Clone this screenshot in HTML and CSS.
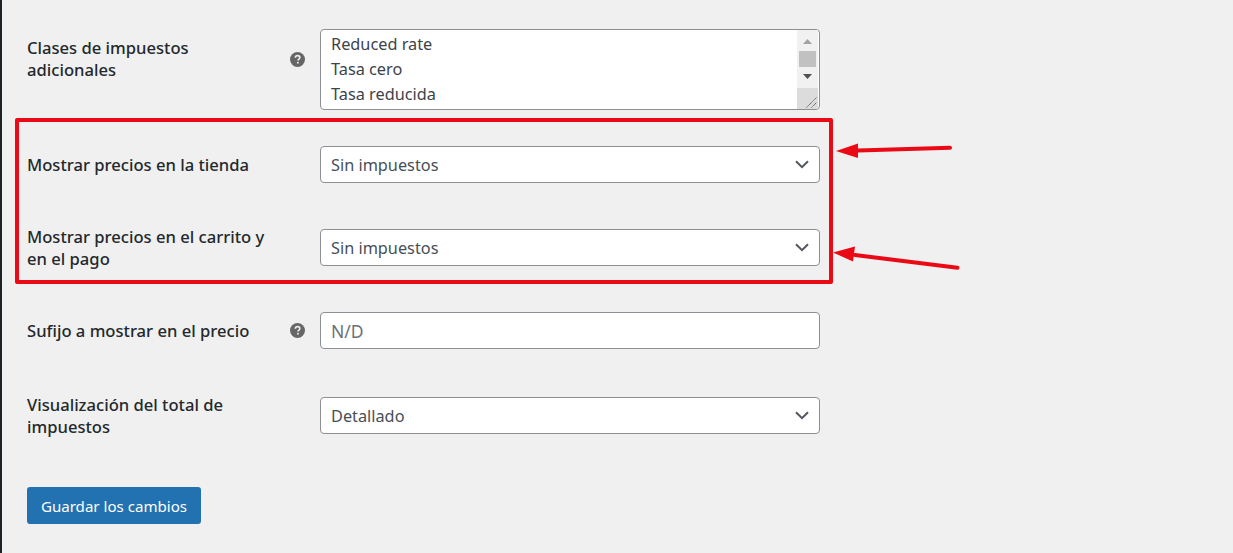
FILE: index.html
```html
<!DOCTYPE html>
<html lang="en">
<head>
    <meta charset="UTF-8">
    <meta name="viewport" content="width=device-width, initial-scale=1.0">
    <title>Opciones de impuestos</title>
    <link rel="stylesheet" href="styles.css">
</head>
<body>
    <form class="settings">
        <!-- Tax classes -->
        <div class="row row-list">
            <label class="row-label">Clases de impuestos adicionales</label>
            <span class="help-cell">
                <svg class="help-icon" viewBox="0 0 16 16"><circle cx="8" cy="8" r="8" fill="#666"/><path d="M5.6 6.200c.1-1.500 1.100-2.300 2.500-2.300s2.400.8 2.400 2c0 1-.6 1.500-1.200 1.900-.6.4-.8.7-.8 1.300" fill="none" stroke="#efefef" stroke-width="1.700"/><rect x="7.500" y="10.500" width="1.800" height="1.800" fill="#efefef"/></svg>
            </span>
            <div class="listbox">
                <ul class="listbox-items">
                    <li>Reduced rate</li>
                    <li>Tasa cero</li>
                    <li>Tasa reducida</li>
                </ul>
                <div class="scrollbar">
                    <svg class="scroll-arrow" viewBox="0 0 9 5"><path d="M4.500 0L9 5H0z" fill="#a3a3a3"/></svg>
                    <div class="scroll-thumb"></div>
                    <svg class="scroll-arrow" viewBox="0 0 9 5"><path d="M0 0h9L4.500 5z" fill="#505050"/></svg>
                    <div class="scroll-corner">
                        <svg viewBox="0 0 11 11"><path d="M0.500 10.500L10.500 0.500M5.500 10.500L10.500 5.500" stroke="#555" stroke-width="1" stroke-dasharray="1.200 .5" fill="none"/></svg>
                    </div>
                </div>
            </div>
        </div>

        <!-- Price display -->
        <div class="row row-shop">
            <label class="row-label">Mostrar precios en la tienda</label>
            <span class="help-cell"></span>
            <div class="field select-field">Sin impuestos
                <svg class="chevron" viewBox="0 0 14 9"><path d="M1 1.200l6 6 6-6" fill="none" stroke="#50575e" stroke-width="2"/></svg>
            </div>
        </div>
        <div class="row row-cart">
            <label class="row-label">Mostrar precios en el carrito y en el pago</label>
            <span class="help-cell"></span>
            <div class="field select-field">Sin impuestos
                <svg class="chevron" viewBox="0 0 14 9"><path d="M1 1.200l6 6 6-6" fill="none" stroke="#50575e" stroke-width="2"/></svg>
            </div>
        </div>

        <div class="row row-suffix">
            <label class="row-label">Sufijo a mostrar en el precio</label>
            <span class="help-cell">
                <svg class="help-icon" viewBox="0 0 16 16"><circle cx="8" cy="8" r="8" fill="#666"/><path d="M5.6 6.200c.1-1.500 1.100-2.300 2.500-2.300s2.400.8 2.400 2c0 1-.6 1.500-1.200 1.900-.6.4-.8.7-.8 1.300" fill="none" stroke="#efefef" stroke-width="1.700"/><rect x="7.500" y="10.500" width="1.800" height="1.800" fill="#efefef"/></svg>
            </span>
            <div class="field text-field">N/D</div>
        </div>
        <div class="row row-total">
            <label class="row-label">Visualización del total de impuestos</label>
            <span class="help-cell"></span>
            <div class="field select-field">Detallado
                <svg class="chevron" viewBox="0 0 14 9"><path d="M1 1.200l6 6 6-6" fill="none" stroke="#50575e" stroke-width="2"/></svg>
            </div>
        </div>

        <button type="button" class="save-btn">Guardar los cambios</button>
    </form>

    <!-- Red annotations on top of the screenshot -->
    <div class="note-box"></div>
    <svg class="note-arrows" viewBox="0 0 1233 553">
        <path d="M950 147.700L858 150.500" stroke="#ea0a16" stroke-width="4" stroke-linecap="round" fill="none"/>
        <path d="M836 151L858 143.500V158z" fill="#ea0a16"/>
        <path d="M957.500 267.800L855 255" stroke="#ea0a16" stroke-width="4" stroke-linecap="round" fill="none"/>
        <path d="M833 252.500L855 246.500L853 261.500z" fill="#ea0a16"/>
    </svg>
</body>
</html>
```

FILE: styles.css
```css
* {
    margin: 0;
    padding: 0;
    box-sizing: border-box;
}

body {
    position: relative;
    height: 553px;
    overflow: hidden;
    background: #f0f0f0;
    border-left: 2px solid #1d2327;
    color: #1d2327;
    font-family: "Noto Sans", "Open Sans", sans-serif;
    font-size: 16px;
}

.settings {
    display: flex;
    flex-direction: column;
    align-items: flex-start;
    padding: 29px 0 0 25px;
}

/* Label, help icon, control */
.row {
    display: grid;
    grid-template-columns: 245px 16px 32px 500px;
    align-items: center;
}

.row-list {
    align-items: start;
    margin-bottom: 37px;
}

.row-shop {
    margin-bottom: 43px;
}

.row-cart {
    margin-bottom: 42px;
}

.row-suffix {
    margin-bottom: 45px;
}

.row-total {
    margin-bottom: 49px;
}

.row-label {
    grid-column: 1 / 3;
    max-width: 245px;
    font-size: 16.600px;
    font-weight: 500;
    line-height: 22px;
    color: #23282d;
}

.row-suffix .row-label {
    max-width: none;
}

.row-list .row-label,
.row-list .help-cell {
    margin-top: 8px;
}

.help-cell {
    display: flex;
    align-items: center;
    height: 100%;
}

.row-list .help-cell {
    height: 44px;
}

.help-icon {
    width: 15px;
    height: 15px;
    margin-left: 2px;
}

/* Inputs */
.field {
    display: flex;
    align-items: center;
    justify-content: space-between;
    height: 36px;
    padding: 0 10px;
    background: #fff;
    border: 1px solid #8c8f94;
    border-radius: 4px;
    color: #484f55;
    font-size: 16.300px;
}

.select-field {
    height: 37px;
    margin-top: -1px;
}

.text-field {
    height: 37px;
    color: #6b7078;
    font-size: 17.500px;
}

.chevron {
    width: 14px;
    height: 9px;
}

/* Multi select with its scrollbar */
.listbox {
    display: flex;
    justify-content: space-between;
    height: 81px;
    background: #fff;
    border: 1px solid #8c8f94;
    border-radius: 4px;
    overflow: hidden;
}

.listbox-items {
    list-style: none;
    padding: 2px 10px;
    color: #3c434a;
    font-size: 16.300px;
    line-height: 25px;
}

.scrollbar {
    display: flex;
    flex-direction: column;
    align-items: center;
    width: 21px;
    margin-right: 1px;
    background: #f1f1f1;
}

.scroll-arrow {
    width: 9px;
    height: 5px;
    margin: 9px 0 0;
}

.scroll-thumb {
    width: 17px;
    height: 16px;
    margin: 7px 0 -2px;
    background: #c1c1c1;
}

.scroll-corner {
    display: flex;
    align-items: flex-end;
    justify-content: flex-end;
    width: 21px;
    height: 21px;
    margin-top: auto;
    padding: 0 1px 1px 0;
    background: #dcdcdc;
}

.scroll-corner svg {
    width: 11px;
    height: 11px;
}

.save-btn {
    width: 174px;
    height: 37px;
    background: #2271b1;
    border: none;
    border-radius: 3px;
    color: #fff;
    font-family: inherit;
    font-size: 15.100px;
}

/* Annotations */
.note-box {
    position: absolute;
    left: 13px;
    top: 118px;
    width: 818px;
    height: 166px;
    border: 4px solid #ea0a16;
    border-radius: 2px;
}

.note-arrows {
    position: absolute;
    left: -2px;
    top: 0;
    width: 1233px;
    height: 553px;
}
```
